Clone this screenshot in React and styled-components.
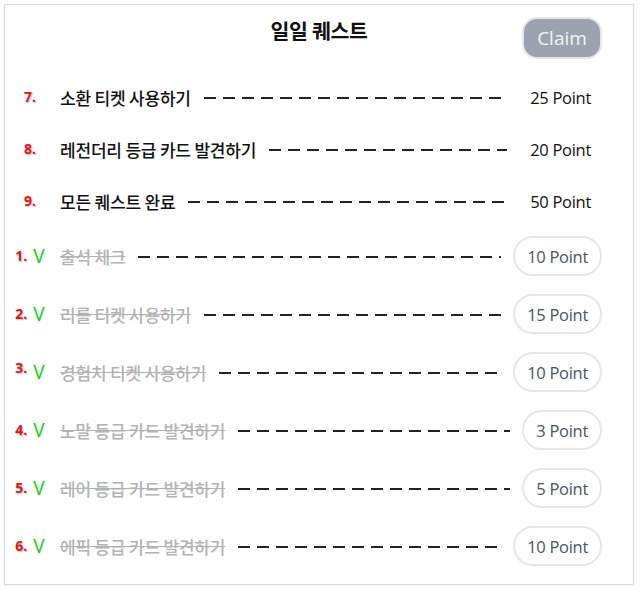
import styled, { createGlobalStyle } from 'styled-components';

const quests = [
  { no: 7, title: '소환 티켓 사용하기', point: 25, done: false },
  { no: 8, title: '레전더리 등급 카드 발견하기', point: 20, done: false },
  { no: 9, title: '모든 퀘스트 완료', point: 50, done: false },
  { no: 1, title: '출석 체크', point: 10, done: true },
  { no: 2, title: '리롤 티켓 사용하기', point: 15, done: true },
  { no: 3, title: '경험치 티켓 사용하기', point: 10, done: true, raised: true },
  { no: 4, title: '노말 등급 카드 발견하기', point: 3, done: true },
  { no: 5, title: '레어 등급 카드 발견하기', point: 5, done: true },
  { no: 6, title: '에픽 등급 카드 발견하기', point: 10, done: true },
];

function App() {
  return (
    <>
      <GlobalStyle />
      <Card>
        <Header>
          <span />
          <Title>일일 퀘스트</Title>
          <ClaimButton disabled>Claim</ClaimButton>
        </Header>
        <QuestList>
          {quests.map(q => (
            <QuestRow key={q.no}>
              <Marker>
                <Num $raised={q.raised}>{q.no}.</Num>
                {q.done && <Check>V</Check>}
              </Marker>
              <QuestName $done={q.done}>{q.title}</QuestName>
              <Dashes />
              <Point $done={q.done}>{q.point} Point</Point>
            </QuestRow>
          ))}
        </QuestList>
      </Card>
    </>
  );
}

export default App;

const GlobalStyle = createGlobalStyle`
  body {
    margin: 0;
    padding: 4px;
    background: #fff;
    font-family: "Noto Sans CJK KR", "Noto Sans", sans-serif;
  }
`;

const Card = styled.div`
  width: 630px;
  height: 581px;
  box-sizing: border-box;
  border: 1px solid #dcdcdc;
  box-shadow: 0 0 2px rgba(0, 0, 0, 0.08);
  padding: 12px 31px 18px 4px;
  display: flex;
  flex-direction: column;
`;

const Header = styled.div`
  display: grid;
  grid-template-columns: 1fr auto 1fr;
  align-items: start;
  margin-bottom: 21px;
  margin-left: 27px;
`;

const Title = styled.h1`
  margin: 0;
  font-size: 20.5px;
  line-height: 26px;
  font-weight: 700;
  color: #111;
  letter-spacing: -0.3px;
`;

const ClaimButton = styled.button`
  justify-self: end;
  width: 80px;
  height: 42px;
  border: 2px solid #e5e7eb;
  border-radius: 15px;
  background: #9ca3af;
  color: #f3f4f6;
  font-family: "Open Sans", sans-serif;
  font-size: 19px;
  padding: 0;
  cursor: default;
`;

const QuestList = styled.div`
  display: flex;
  flex-direction: column;
  gap: 18px;
`;

const QuestRow = styled.div`
  display: flex;
  align-items: center;
`;

const Marker = styled.div`
  width: 42px;
  display: flex;
  justify-content: center;
  align-items: center;
  gap: 6px;
  margin-right: 9px;
`;

const Num = styled.span`
  color: #ee1111;
  font-family: "Open Sans", sans-serif;
  font-weight: 700;
  font-size: 14px;
  text-shadow: 1px 1px 1px rgba(0, 0, 0, 0.25);
  position: relative;
  top: ${p => (p.$raised ? '-5px' : '-1px')};
`;

const Check = styled.span`
  color: #1ed01e;
  font-family: "Noto Sans", sans-serif;
  font-size: 19px;
  line-height: 1;
`;

const QuestName = styled.span`
  font-size: 17px;
  font-weight: 500;
  color: ${p => (p.$done ? '#b3b3b3' : '#111')};
  text-decoration: ${p => (p.$done ? 'line-through' : 'none')};
  text-decoration-color: #b3b3b3;
  letter-spacing: -0.2px;
  white-space: nowrap;
`;

const Dashes = styled.div`
  flex: 1;
  height: 2px;
  margin: 2px 12px 0 13px;
  background: repeating-linear-gradient(
    to right,
    #222 0,
    #222 12px,
    transparent 12px,
    transparent 19px
  );
`;

const Point = styled.span`
  box-sizing: border-box;
  height: ${p => (p.$done ? '40px' : '34px')};
  display: flex;
  align-items: center;
  padding: 0 ${p => (p.$done ? '12px' : '11px')};
  border: ${p => (p.$done ? '2.5px solid #e5e7eb' : 'none')};
  border-radius: 20px;
  font-family: "Open Sans", sans-serif;
  font-size: 16.5px;
  letter-spacing: -0.3px;
  color: ${p => (p.$done ? '#4b5563' : '#111')};
  white-space: nowrap;
`;
